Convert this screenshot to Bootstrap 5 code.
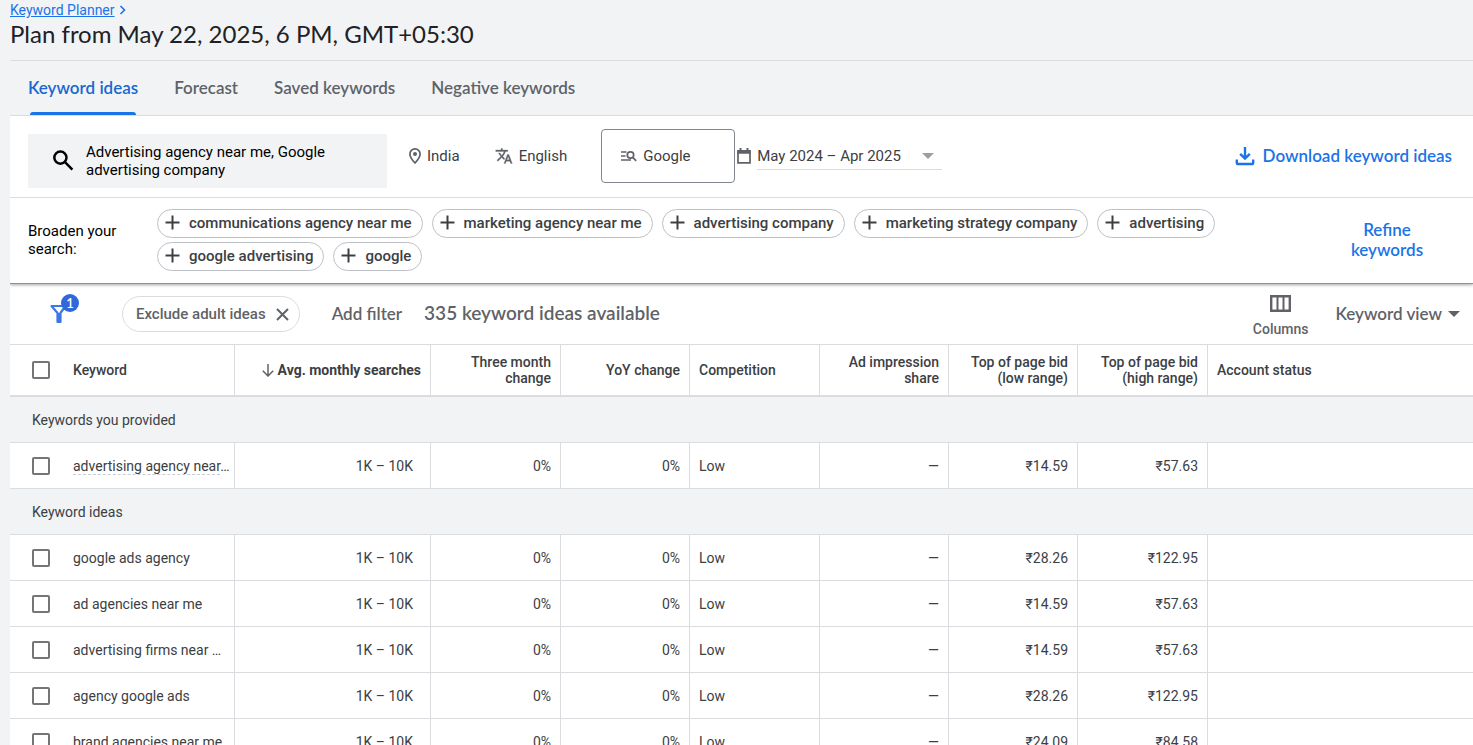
<!DOCTYPE html>
<html lang="en">
<head>
<meta charset="utf-8">
<meta name="viewport" content="width=device-width, initial-scale=1">
<title>Keyword Planner</title>
<link href="https://cdn.jsdelivr.net/npm/bootstrap@5.3.0/dist/css/bootstrap.min.css" rel="stylesheet">
<style>
  body { font: 400 14px/18px Roboto, "Liberation Sans", sans-serif; color: #3c4043; background: #f1f3f4; }
  svg { display: block; flex: none; }
  .app { padding-left: 10px; }
  .brandface { font-family: Lato, Roboto, sans-serif; font-weight: 600; }
  .line-b { border-bottom: 1px solid #dadce0; }
  .plan-head { height: 61px; }
  .crumb { height: 20px; line-height: 20px; color: #1a73e8; }
  .crumb a { color: #1a73e8; }
  .plan-title { font-size: 24px; line-height: 28px; font-weight: 400; color: #202124; }
  .tabs { height: 55px; padding-left: 18px; gap: 36px; }
  .tabs .nav-link { padding: 0; height: 54px; line-height: 54px; font-size: 17px; color: #5f6368; position: relative; }
  .tabs .nav-link.active { color: #1967d2; }
  .tabs .nav-link.active::after { content: ""; position: absolute; left: 2px; right: 2px; bottom: 0; height: 3px; border-radius: 3px 3px 0 0; background: #1a73e8; }
  .scope { height: 82px; padding: 0 21px 2px 18px; }
  .scope button, .refine, .filters button { background: none; border: 0; padding: 0; color: inherit; }
  .scope .seedbox { width: 359px; height: 54px; margin-top: 10px; padding: 0 24px; gap: 12px; background: #f1f3f4; color: #000; line-height: 18px; text-align: left; font-size: 15px; }
  .setting { font-size: 15px; gap: 6px; color: #3c4043; white-space: nowrap; }
  .after-seed { margin-left: 22px; }
  .after-setting { margin-left: 35px; }
  .scope .network { width: 134px; height: 54px; margin-left: 34px; padding-left: 19px; border: 1px solid #80868b; border-radius: 4px; }
  .cal { margin: 0 6px 0 2px; }
  .scope .period { width: 185px; height: 28px; padding-top: 2px; border-bottom: 1px solid #dadce0; }
  .scope .bluebtn, .bluebtn.refine { color: #1a73e8; font-size: 17px; }
  .broaden { height: 86px; padding: 11px 48px 0 18px; border-bottom: 1px solid #8f9193; box-shadow: 0 1px 3px rgba(0,0,0,.35); clip-path: inset(0 0 -5px 0); position: relative; }
  .broaden-label { width: 129px; padding-top: 13px; color: #000; font-size: 15px; }
  .broaden-label div { width: 96px; }
  .chips { gap: 4px 9px; align-content: flex-start; }
  .chip { height: 29px; padding: 0 10px 2px 7px; gap: 9px; border: 1px solid #bdc1c6; border-radius: 15px; background: #fff; color: #3c4043; font-weight: 500; font-size: 15px; white-space: nowrap; }
  .refine { width: 76px; line-height: 20px; margin-top: 11px; height: 40px; }
  .filters { height: 61px; padding: 0 13px 0 40px; color: #5f6368; }
  .funnel { width: 32px; height: 32px; position: relative; }
  .funnel .count { position: absolute; left: 11px; top: -4px; width: 18px; height: 18px; border-radius: 9px; background: #2f68db; color: #fff; font-size: 13px; line-height: 18px; text-align: center; }
  .filters .pill { height: 36px; margin-left: 40px; padding: 0 10px 0 13px; gap: 10px; border: 1px solid #dadce0; border-radius: 18px; font-size: 15px; font-weight: 500; }
  .filters .addf { margin-left: 32px; font-size: 17px; }
  .total { margin-left: 22px; padding-bottom: 2px; font-size: 19px; line-height: 24px; }
  .filters .colbtn { margin-top: 4px; gap: 8px; font-weight: 500; }
  .filters .viewbtn { margin-left: 27px; gap: 6px; font-size: 17px; }
  .tablewrap table { table-layout: fixed; border-collapse: separate; border-spacing: 0; width: 100%; background: #fff; }
  .tablewrap th, .tablewrap td { padding: 0 9px 0 9px; border-bottom: 1px solid #dadce0; border-right: 1px solid #dadce0; vertical-align: middle; }
  .tablewrap tbody td, .tablewrap tbody th { height: 46px; font-weight: 400; }
  .tablewrap thead th { height: 52px; border-bottom-width: 2px; font-weight: 500; line-height: 16px; }
  .tablewrap th.pick, .tablewrap td.pick { border-right: 0; padding: 0 0 0 22px; }
  .tablewrap .kw { padding: 0; white-space: nowrap; }
  .tablewrap tbody .vol { padding-right: 17px; }
  .tablewrap .last { border-right: 0; }
  .tablewrap tbody .group th { background: #f1f3f4; padding-left: 22px; border-right: 0; }
  .kw-hint { border-bottom: 1px dashed #c8cbd0; }
  .tick { appearance: none; display: block; width: 18px; height: 18px; margin: 0; border: 2px solid #757575; border-radius: 2px; background: #fff; }
</style>
</head>
<body>
<div class="app vh-100 overflow-hidden">
  <header class="plan-head line-b">
    <nav class="crumb d-flex align-items-center gap-1" aria-label="Breadcrumb">
      <a href="#">Keyword Planner</a>
      <svg width="8" height="10" viewBox="0 0 8 10" fill="none" stroke="#1a73e8" stroke-width="1.6"><path d="M1.500 1l4 4-4 4"/></svg>
    </nav>
    <h1 class="plan-title brandface fw-normal mb-0">Plan from May 22, 2025, 6 PM, GMT+05:30</h1>
  </header>

  <nav class="nav tabs brandface line-b flex-nowrap">
    <a class="nav-link active" href="#" aria-current="page">Keyword ideas</a>
    <a class="nav-link" href="#">Forecast</a>
    <a class="nav-link" href="#">Saved keywords</a>
    <a class="nav-link" href="#">Negative keywords</a>
  </nav>

  <main class="bg-white">
    <section class="scope line-b d-flex align-items-center">
      <button type="button" class="seedbox d-flex align-items-center flex-shrink-0">
        <svg width="22" height="22" viewBox="0 0 22 22" fill="none" stroke="#000" stroke-width="2.500"><circle cx="8.400" cy="7.600" r="6.100"/><path d="M13 12.200l7.400 7.400"/></svg>
        <span>Advertising agency near me, Google advertising company</span>
      </button>
      <button type="button" class="setting after-seed d-flex align-items-center">
        <svg width="12" height="16" viewBox="0 0 12 16"><path d="M6 .9A5.100 5.100 0 0 0 .9 6C.9 9.700 6 15 6 15S11.100 9.700 11.100 6A5.100 5.100 0 0 0 6 .9z" fill="none" stroke="#5f6368" stroke-width="1.700"/><circle cx="6" cy="6" r="2" fill="#5f6368"/></svg>
        India
      </button>
      <button type="button" class="setting after-setting d-flex align-items-center">
        <svg width="18" height="18" viewBox="0 0 24 24" fill="#5f6368" stroke="#5f6368" stroke-width=".4"><path d="M12.870 15.070l-2.540-2.510.030-.030A17.520 17.520 0 0 0 14.070 6H17V4h-7V2H8v2H1v2h11.170C11.500 7.920 10.440 9.750 9 11.350 8.070 10.320 7.300 9.190 6.690 8h-2c.730 1.630 1.730 3.170 2.980 4.560l-5.090 5.020L4 19l5-5 3.110 3.110.760-2.040zM18.500 10h-2L12 22h2l1.120-3h4.750L21 22h2l-4.500-12zm-2.620 7l1.620-4.330L19.120 17h-3.240z"/></svg>
        English
      </button>
      <button type="button" class="setting network d-flex align-items-center">
        <svg width="16" height="12" viewBox="0 0 16 12" fill="none" stroke="#5f6368" stroke-width="1.700"><path d="M0 2h5.500M0 6h4.500M0 10h10M11.700 7.300l3.500 3.500"/><circle cx="9.500" cy="5" r="3.200"/></svg>
        Google
      </button>
      <svg class="cal" width="14" height="16" viewBox="0 0 14 16"><path d="M1 2.800h12v12H1z" fill="none" stroke="#5f6368" stroke-width="1.700"/><path d="M.5 2h13v3.800H.5zM2.500 0h2v3h-2zM9.500 0h2v3h-2z" fill="#5f6368"/></svg>
      <button type="button" class="setting period d-flex align-items-center justify-content-between">
        <span>May 2024 – Apr 2025</span>
        <svg class="me-2" width="12" height="6" viewBox="0 0 12 6" fill="#9aa0a6"><path d="M0 0h12L6 6z"/></svg>
      </button>
      <button type="button" class="bluebtn brandface d-flex align-items-center gap-2 ms-auto">
        <svg width="20" height="20" viewBox="0 0 20 20" fill="none" stroke="#1a73e8" stroke-width="2.400"><path d="M10 1v11M5.200 7.800L10 12.600l4.800-4.800M1.800 13.500V17a1 1 0 0 0 1 1h14.400a1 1 0 0 0 1-1v-3.500"/></svg>
        Download keyword ideas
      </button>
    </section>

    <section class="broaden bg-white d-flex">
      <div class="broaden-label flex-shrink-0"><div>Broaden your search:</div></div>
      <div class="chips d-flex flex-wrap flex-grow-1" id="chips"></div>
      <button type="button" class="refine bluebtn brandface flex-shrink-0 ms-5">Refine keywords</button>
    </section>

    <section class="filters line-b d-flex align-items-center">
      <button type="button" class="funnel" aria-label="Filters">
        <svg width="18" height="20" viewBox="0 0 18 20" fill="none" stroke="#3b78e7" stroke-width="2.200"><path d="M1.500 2h14L10.500 9v9h-3V9z" stroke-linejoin="round"/><path d="M9 9v9" stroke-width="4"/></svg>
        <span class="count brandface">1</span>
      </button>
      <div class="pill d-flex align-items-center">Exclude adult ideas
        <button type="button" aria-label="Remove filter"><svg width="13" height="13" viewBox="0 0 13 13" stroke="#5f6368" stroke-width="2"><path d="M1 1l11 11M12 1L1 12"/></svg></button>
      </div>
      <button type="button" class="addf brandface">Add filter</button>
      <div class="total brandface">335 keyword ideas available</div>
      <button type="button" class="ms-auto colbtn d-flex flex-column align-items-center">
        <svg width="21" height="17" viewBox="0 0 21 17" fill="none" stroke="#5f6368"><path d="M1.200 1.200h18.600v14.600H1.200z" stroke-width="2.400"/><path d="M7.500 1v15M13.500 1v15" stroke-width="2"/></svg>
        <span>Columns</span>
      </button>
      <button type="button" class="viewbtn brandface d-flex align-items-center">Keyword view
        <svg width="12" height="6" viewBox="0 0 12 6" fill="#5f6368"><path d="M0 0h12L6 6z"/></svg>
      </button>
    </section>

    <div class="tablewrap">
      <table>
        <colgroup><col style="width:63px"><col style="width:162px"><col style="width:196px"><col style="width:130px"><col style="width:129px"><col style="width:130px"><col style="width:129px"><col style="width:129px"><col style="width:130px"><col></colgroup>
        <thead>
          <tr>
            <th class="pick"><input type="checkbox" class="tick" aria-label="Select all"></th>
            <th class="kw">Keyword</th>
            <th><div class="d-flex justify-content-end align-items-center gap-1 fw-bold"><svg width="12" height="13" viewBox="0 0 12 13" fill="none" stroke="#5f6368" stroke-width="1.500"><path d="M6 0v12M.8 6.800L6 12l5.200-5.200"/></svg>Avg. monthly searches</div></th>
            <th class="text-end">Three month change</th>
            <th class="text-end">YoY change</th>
            <th>Competition</th>
            <th class="text-end">Ad impression share</th>
            <th class="text-end">Top of page bid (low range)</th>
            <th class="text-end">Top of page bid (high range)</th>
            <th class="last">Account status</th>
          </tr>
        </thead>
        <tbody id="rows"></tbody>
      </table>
    </div>
  </main>
</div>
<script src="https://cdn.jsdelivr.net/npm/bootstrap@5.3.0/dist/js/bootstrap.bundle.min.js"></script>
<script>
  const plus = '<svg width="15" height="15" viewBox="0 0 15 15" stroke="#3c4043" stroke-width="2"><path d="M7.500 .5v14M.5 7.500h14"/></svg>';
  document.getElementById('chips').innerHTML = ['communications agency near me', 'marketing agency near me', 'advertising company', 'marketing strategy company', 'advertising', 'google advertising', 'google']
    .map(t => `<button type="button" class="chip d-flex align-items-center">${plus}${t}</button>`).join('');
  const group = t => `<tr class="group"><th colspan="10" scope="colgroup">${t}</th></tr>`;
  const row = ([k, low, high]) => `<tr><td class="pick"><input type="checkbox" class="tick" aria-label="Select keyword"></td>
    <td class="kw">${k}</td><td class="vol text-end">1K – 10K</td>
    <td class="text-end">0%</td><td class="text-end">0%</td><td>Low</td><td class="text-end">—</td>
    <td class="text-end">₹${low}</td><td class="text-end">₹${high}</td><td class="last"></td></tr>`;
  document.getElementById('rows').innerHTML = group('Keywords you provided')
    + row(['<span class="kw-hint">advertising agency near</span>…', '14.59', '57.63']) + group('Keyword ideas')
    + [['google ads agency', '28.26', '122.95'], ['ad agencies near me', '14.59', '57.63'], ['advertising firms near …', '14.59', '57.63'],
       ['agency google ads', '28.26', '122.95'], ['brand agencies near me', '24.09', '84.58']].map(row).join('');
</script>
</body>
</html>
